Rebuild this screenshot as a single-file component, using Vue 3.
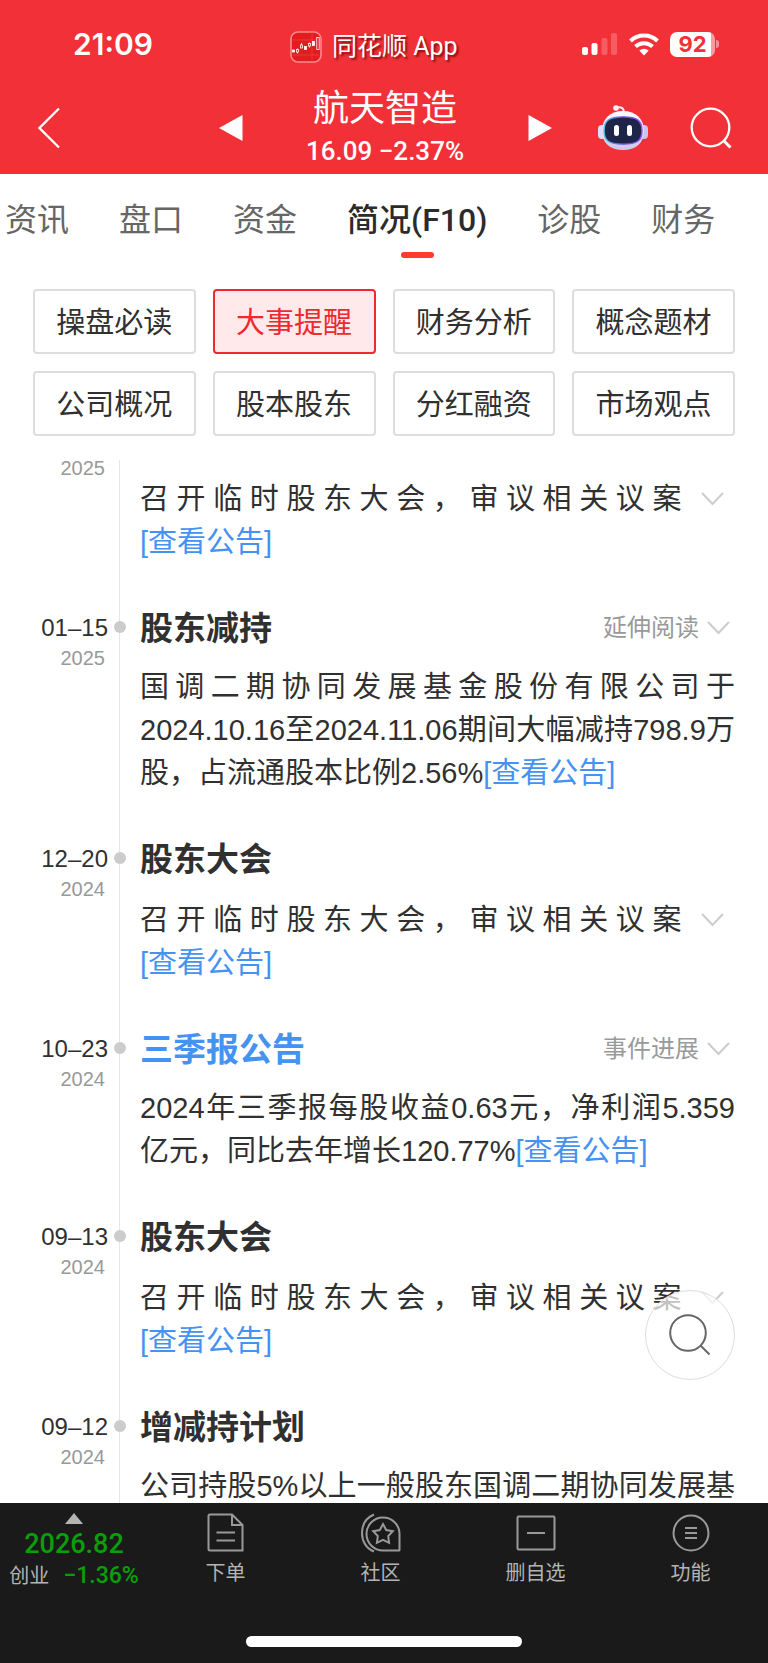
<template>
  <div class="app">
    <header class="header">
      <div class="status">
        <span class="clock">21:09</span>
        <div class="brand">
          <svg class="brand-icon" viewBox="0 0 32 32" aria-hidden="true">
            <rect x="1" y="1" width="30" height="30" rx="7" fill="#e31c20" stroke="#ff8a8c" stroke-width="1.6" />
            <path d="M3 9h26M3 24h26M22 3v26" stroke="#ee4a4c" stroke-width=".6" />
            <g fill="#fff" stroke="#fff" stroke-width=".8">
              <rect x="2.500" y="19" width="2" height="2" />
              <path d="M7.500 17.500v5" />
              <rect x="6.500" y="18.500" width="2" height="2.500" fill="#e31c20" />
              <path d="M11.500 12v5" />
              <rect x="10.500" y="14" width="2" height="3" fill="#e31c20" />
              <rect x="14.500" y="15.500" width="2" height="3" />
              <path d="M19.500 11.500v5" />
              <rect x="18.500" y="12.500" width="2" height="2.500" fill="#e31c20" />
              <rect x="22.500" y="10.500" width="2" height="4" />
              <rect x="26.800" y="6.500" width="2.400" height="12" fill="#e31c20" />
            </g>
          </svg>
          <span class="brand-name">同花顺 App</span>
        </div>
        <div class="indicators">
          <svg width="36" height="24" viewBox="0 0 36 24" fill="#fff" aria-hidden="true">
            <rect x="0" y="15" width="6" height="8" rx="2" />
            <rect x="9.500" y="11" width="6" height="12" rx="2" />
            <rect x="19.500" y="6" width="6" height="17" rx="2" opacity=".22" />
            <rect x="29" y="1" width="6" height="22" rx="2" opacity=".22" />
          </svg>
          <svg width="30" height="24" viewBox="0 0 30 24" aria-hidden="true">
            <path d="M1.500 9a19.500 19.500 0 0 1 27 0" fill="none" stroke="#fff" stroke-width="4" />
            <path d="M6.500 14.500a12.500 12.500 0 0 1 17 0" fill="none" stroke="#fff" stroke-width="4" />
            <path d="M15 23.500l-4.700-4.900a7 7 0 0 1 9.400 0z" fill="#fff" />
          </svg>
          <div class="battery"><span class="battery-level">92</span></div>
        </div>
      </div>

      <nav class="nav">
        <button class="icon-btn" aria-label="返回">
          <svg width="24" height="42" viewBox="0 0 24 42">
            <path d="M21 1.500L1.500 21 21 40.500" fill="none" stroke="#fff" stroke-width="2.300" />
          </svg>
        </button>
        <div class="stock">
          <button class="icon-btn" aria-label="上一只">
            <svg width="24" height="26" viewBox="0 0 24 26"><path d="M0 13L23.500 0v26z" fill="#fff" /></svg>
          </button>
          <div class="stock-info">
            <h1 class="stock-name">航天智造</h1>
            <p class="stock-price">16.09 −2.37%</p>
          </div>
          <button class="icon-btn" aria-label="下一只">
            <svg width="24" height="26" viewBox="0 0 24 26"><path d="M24 13L.5 0v26z" fill="#fff" /></svg>
          </button>
        </div>
        <div class="nav-right">
          <button class="icon-btn" aria-label="智能助手">
            <svg width="50" height="48" viewBox="0 0 50 48">
              <defs>
                <linearGradient id="shell" x1="0" y1="0" x2="0" y2="1">
                  <stop offset="0" stop-color="#fff" />
                  <stop offset="1" stop-color="#c9c8ec" />
                </linearGradient>
                <linearGradient id="rim" x1="0" y1="0" x2="1" y2="0">
                  <stop offset="0" stop-color="#5fc4e8" />
                  <stop offset=".5" stop-color="#6a43d8" />
                  <stop offset="1" stop-color="#8c5cff" />
                </linearGradient>
              </defs>
              <path d="M18 4c5-2 8 0 8 5" fill="none" stroke="#f1effc" stroke-width="2" />
              <circle cx="18" cy="4" r="2.800" fill="#f4f2fd" />
              <rect x="0" y="21" width="8" height="14" rx="4" fill="#dedcf6" />
              <rect x="42" y="21" width="8" height="14" rx="4" fill="#c9c5ee" />
              <path d="M25 7c13 0 21 8 21 20S38 46 25 46 4 39 4 27 12 7 25 7z" fill="url(#shell)" />
              <path d="M25 13c14 0 19 3 19 14 0 10-5 13-19 13S6 37 6 27c0-11 5-14 19-14z" fill="#1e2548" stroke="url(#rim)" stroke-width="1.500" />
              <rect x="16" y="21" width="5" height="11" rx="2.500" fill="#fff" />
              <rect x="29" y="21" width="5" height="11" rx="2.500" fill="#fff" />
            </svg>
          </button>
          <button class="icon-btn" aria-label="搜索">
            <svg width="42" height="42" viewBox="0 0 42 42" fill="none" stroke="#fff" stroke-width="2.300">
              <circle cx="20.500" cy="20.500" r="18.800" />
              <path d="M33.500 33.500l7 7" stroke-width="3" />
            </svg>
          </button>
        </div>
      </nav>
    </header>

    <nav class="tabs">
      <a
        v-for="tab in tabs"
        :key="tab"
        href="#"
        class="tab"
        :class="{ active: tab === activeTab }"
        @click.prevent="activeTab = tab"
      >{{ tab }}</a>
    </nav>

    <div class="pills">
      <button
        v-for="pill in pills"
        :key="pill"
        class="pill"
        :class="{ active: pill === activePill }"
        @click="activePill = pill"
      >{{ pill }}</button>
    </div>

    <main class="content">
      <ol class="timeline">
        <li v-for="(item, i) in events" :key="i" class="event">
          <div class="when">
            <div class="day">{{ item.day }}</div>
            <div class="year">{{ item.year }}</div>
          </div>
          <div class="rail"><i v-if="item.day" class="dot"></i></div>
          <div class="detail">
            <div class="event-head">
              <h2 v-if="item.title" class="event-title" :class="{ blue: item.highlight }">{{ item.title }}</h2>
              <button v-if="item.more" class="more">
                {{ item.more }}
                <svg class="chevron" viewBox="0 0 23 14"><path d="M1 1l10.500 11L22 1" /></svg>
              </button>
            </div>
            <p class="event-body" :class="{ foldable: item.foldable, cut: item.cut }">{{ item.text }}<button
              v-if="item.foldable" class="fold" aria-label="展开"><svg class="chevron" viewBox="0 0 23 14"><path d="M1 1l10.500 11L22 1" /></svg></button><a
              v-if="!item.cut" href="#" class="notice">[查看公告]</a></p>
          </div>
        </li>
      </ol>
      <button class="float-search" aria-label="搜索">
        <svg width="42" height="42" viewBox="0 0 42 42" fill="none" stroke="#666" stroke-width="2">
          <circle cx="19" cy="19" r="17.800" />
          <path d="M31.500 31.500l9 9" />
        </svg>
      </button>
    </main>

    <footer class="footer">
      <div class="toolbar">
        <button class="index">
          <svg width="18" height="11" viewBox="0 0 18 11"><path d="M9 0l9 11H0z" fill="#b4b4b4" /></svg>
          <span class="index-value">2026.82</span>
          <span class="index-row">
            <span class="index-name">创业</span>
            <span class="index-change">−1.36%</span>
          </span>
        </button>
        <button class="tool">
          <svg class="tool-icon" viewBox="0 0 40 40">
            <path d="M4 1.500h22L36.500 12v25.500H4a1.500 1.500 0 0 1-1.500-1.500V3A1.500 1.500 0 0 1 4 1.500z" />
            <path d="M26 1.500V12h10.500M10.500 19.500H29M10.500 27.500H29" />
          </svg>
          下单
        </button>
        <button class="tool">
          <svg class="tool-icon" viewBox="0 0 40 40">
            <path d="M38 37.500H22.500a16.500 16.500 0 1 1 16-16.500v16a.5.5 0 0 1-.5.500z" />
            <path d="M13 1.500C5 5 1 12 1 20s4 15.500 12 18.500" />
            <path d="M22 11l3.200 6 6.600 1.200-4.600 4.900.9 6.700-6.100-2.900-6.100 2.900.9-6.700-4.600-4.900 6.600-1.200z" />
          </svg>
          社区
        </button>
        <button class="tool">
          <svg class="tool-icon" viewBox="0 0 40 40">
            <rect x="1.500" y="3.500" width="37" height="33" rx="1" />
            <path d="M11 20h18" />
          </svg>
          删自选
        </button>
        <button class="tool">
          <svg class="tool-icon" viewBox="0 0 40 40">
            <circle cx="20" cy="20" r="17.500" />
            <path d="M14 15h12M14 20h12M14 25h12" />
          </svg>
          功能
        </button>
      </div>
      <div class="home-bar"></div>
    </footer>
  </div>
</template>

<script setup>
import { ref } from 'vue';

const tabs = ['资讯', '盘口', '资金', '简况(F10)', '诊股', '财务'];
const activeTab = ref('简况(F10)');

const pills = [
  '操盘必读', '大事提醒', '财务分析', '概念题材',
  '公司概况', '股本股东', '分红融资', '市场观点',
];
const activePill = ref('大事提醒');

// the first entry is scrolled half out of view, only its year and body are left
const events = [
  { year: '2025', text: '召开临时股东大会，审议相关议案', foldable: true },
  {
    day: '01–15', year: '2025', title: '股东减持', more: '延伸阅读',
    text: '国调二期协同发展基金股份有限公司于2024.10.16至2024.11.06期间大幅减持798.9万股，占流通股本比例2.56%',
  },
  { day: '12–20', year: '2024', title: '股东大会', text: '召开临时股东大会，审议相关议案', foldable: true },
  {
    day: '10–23', year: '2024', title: '三季报公告', highlight: true, more: '事件进展',
    text: '2024年三季报每股收益0.63元，净利润5.359亿元，同比去年增长120.77%',
  },
  { day: '09–13', year: '2024', title: '股东大会', text: '召开临时股东大会，审议相关议案', foldable: true },
  { day: '09–12', year: '2024', title: '增减持计划', text: '公司持股5%以上一般股东国调二期协同发展基', cut: true },
];
</script>

<style>
body {
  margin: 0;
  background: #fff;
}
</style>

<style scoped>
.app {
  display: flex;
  flex-direction: column;
  height: 100vh;
  overflow: hidden;
  background: #fff;
  color: #303030;
  font-family: Roboto, "Noto Sans CJK SC", sans-serif;
}

button {
  margin: 0;
  padding: 0;
  border: 0;
  background: none;
  color: inherit;
  font: inherit;
  cursor: pointer;
}

a {
  text-decoration: none;
}

h1, h2, p, ol {
  margin: 0;
  padding: 0;
}

svg {
  display: block;
}

/* Header */
.header {
  flex: none;
  padding-bottom: 2px;
  background: #f23038;
  color: #fff;
}

.status {
  display: grid;
  grid-template-columns: 217px auto 1fr;
  align-items: center;
  height: 84px;
  padding: 4px 49px 0 73px;
  box-sizing: border-box;
}

.clock {
  font: 600 30px/36px Inter, sans-serif;
}

.brand {
  display: flex;
  align-items: center;
  gap: 10px;
  padding-top: 5px;
}

.brand-icon {
  width: 32px;
  height: 32px;
}

.brand-name {
  font-size: 25px;
  line-height: 32px;
  text-shadow: 2px 2px 2px rgba(90, 0, 0, 0.7);
}

.indicators {
  display: flex;
  align-items: center;
  justify-content: flex-end;
  gap: 11px;
}

.battery {
  display: flex;
  align-items: center;
  gap: 1px;
}

.battery::after {
  content: "";
  width: 3px;
  height: 8px;
  border-radius: 0 4px 4px 0;
  background: rgba(255, 255, 255, 0.45);
}

.battery-level {
  width: 45px;
  border-radius: 7px;
  background: linear-gradient(90deg, #fff 92%, #fa9ba0 92%);
  color: #f23038;
  font: 700 22px/25px Inter, sans-serif;
  text-align: center;
}

.nav {
  display: grid;
  grid-template-columns: 1fr auto 1fr;
  align-items: center;
  height: 88px;
  padding: 0 36px 0 38px;
}

.stock {
  display: flex;
  align-items: center;
  justify-content: space-between;
  width: 333px;
}

.stock-info {
  text-align: center;
}

.stock-name {
  font-size: 36px;
  font-weight: 400;
  line-height: 46px;
}

.stock-price {
  font-size: 26px;
  font-weight: 500;
  line-height: 38px;
}

.nav-right {
  display: flex;
  align-items: center;
  justify-content: flex-end;
  gap: 42px;
}

/* Tabs and section pills */
.tabs {
  display: flex;
  flex: none;
  gap: 50px;
  padding: 24px 0 0 5px;
  overflow: hidden;
}

.tab {
  flex: none;
  color: #666;
  font-size: 32px;
  line-height: 44px;
}

.tab.active {
  color: #2b2b2b;
  font-weight: 500;
}

.tab::after {
  content: "";
  display: block;
  width: 33px;
  height: 6px;
  margin: 10px auto 0;
  border-radius: 3px;
}

.tab.active::after {
  background: #ff3b30;
}

.pills {
  display: grid;
  flex: none;
  grid-template-columns: repeat(4, 1fr);
  gap: 17px;
  padding: 31px 33px 24px;
}

.pill {
  height: 65px;
  padding-bottom: 4px;
  border: 2px solid #ddd;
  border-radius: 4px;
  font-size: 29px;
}

.pill.active {
  border-color: #ee2a2e;
  background: #ffe9ea;
  color: #ee2a2e;
}

/* Timeline */
.content {
  position: relative;
  flex: 1;
  min-height: 0;
  overflow: hidden;
  font-family: "Liberation Sans", "Noto Sans CJK SC", sans-serif;
}

.timeline {
  margin-top: -45px;
  list-style: none;
}

.event {
  display: grid;
  grid-template-columns: 108px 24px 1fr;
}

.when {
  padding-top: 8px;
  text-align: right;
}

.day {
  min-height: 30px;
  font-size: 24px;
  line-height: 30px;
}

.year {
  padding-right: 3px;
  color: #999;
  font-size: 20px;
  line-height: 30px;
}

.rail {
  background: linear-gradient(#e6e6e6, #e6e6e6) 11px 0 / 1px 100% no-repeat;
}

.dot {
  display: block;
  width: 12px;
  height: 12px;
  margin: 16px auto 0;
  border-radius: 50%;
  background: #ccc;
}

.detail {
  padding: 0 33px 41px 8px;
}

.event-head {
  display: flex;
  align-items: center;
  justify-content: space-between;
  min-height: 47px;
}

.event-title {
  font-size: 33px;
  font-weight: 700;
  line-height: 47px;
}

.event-title.blue {
  color: #4492f1;
}

.more {
  display: flex;
  align-items: center;
  gap: 8px;
  padding: 0 5px 2px 0;
  color: #999;
  font-size: 24px;
  line-height: 30px;
}

.chevron {
  width: 23px;
  height: 14px;
  fill: none;
  stroke: #ccc;
  stroke-width: 2;
}

.event-body {
  margin-top: 14px;
  font-size: 29px;
  line-height: 43px;
  text-align: justify;
}

.event-body.foldable {
  margin-top: 16px;
}

.event-body.cut {
  text-align-last: justify;
}

.fold {
  padding: 0 11px 4px 12px;
  vertical-align: middle;
}

.notice {
  color: #4492f1;
  white-space: nowrap;
}

.float-search {
  position: absolute;
  right: 33px;
  bottom: 123px;
  display: flex;
  align-items: center;
  justify-content: center;
  width: 90px;
  height: 90px;
  border: 1px solid #ddd;
  border-radius: 50%;
  background: rgba(255, 255, 255, 0.7);
}

/* Bottom bar */
.footer {
  flex: none;
  background: #1a1a1a;
  color: #b4b4b4;
}

.toolbar {
  display: grid;
  grid-template-columns: 148px repeat(4, 1fr);
  align-items: start;
  padding-top: 10px;
}

.index {
  display: flex;
  flex-direction: column;
  align-items: center;
}

.index-value {
  margin-top: 4px;
  color: #0a9f0a;
  font-size: 27px;
  font-weight: 500;
  line-height: 32px;
}

.index-row {
  display: flex;
  align-items: center;
  gap: 14px;
  font-size: 20px;
  line-height: 32px;
}

.index-change {
  color: #0a9f0a;
  font-size: 23px;
  font-weight: 500;
}

.tool {
  display: flex;
  flex-direction: column;
  align-items: center;
  gap: 4px;
  font-size: 20px;
  line-height: 32px;
}

.tool-icon {
  width: 40px;
  height: 40px;
  fill: none;
  stroke: #999;
  stroke-width: 2;
}

.home-bar {
  width: 36%;
  height: 11px;
  margin: 44px auto 16px;
  border-radius: 6px;
  background: #fff;
}
</style>
